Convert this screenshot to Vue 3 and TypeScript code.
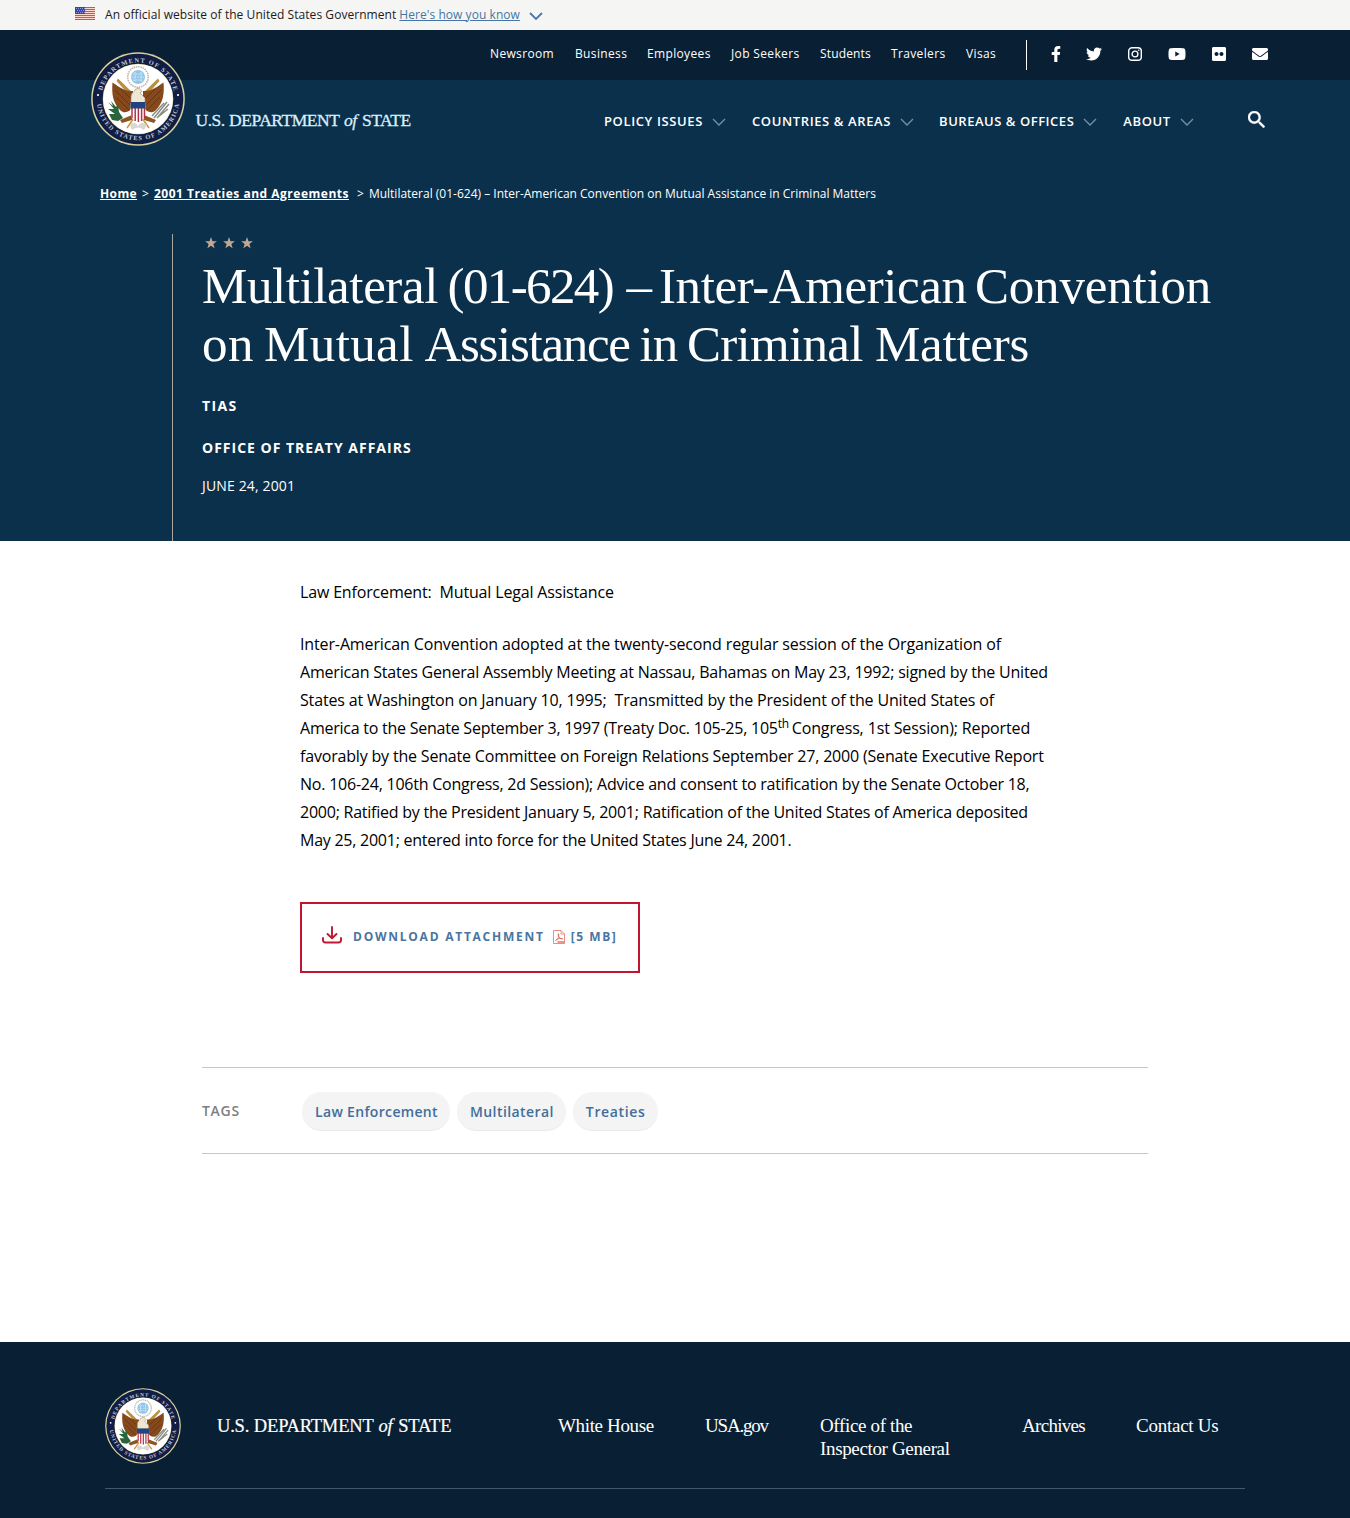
<script setup lang="ts">
interface Tag { label: string; tracking: number }
interface Word { text: string; width: number; tracking: number }
const utilityLinks: string[] = ['Newsroom', 'Business', 'Employees', 'Job Seekers', 'Students', 'Travelers', 'Visas']
const mainLinks: string[] = ['Policy Issues', 'Countries & Areas', 'Bureaus & Offices', 'About']
const tags: Tag[] = [
  { label: 'Law Enforcement', tracking: 0.33 },
  { label: 'Multilateral', tracking: 0.42 },
  { label: 'Treaties', tracking: 0.65 },
]
const titleLines: Word[][] = [
  [
    { text: 'Multilateral ', width: 245.5, tracking: -0.4 },
    { text: '(01-624) ', width: 179, tracking: -1.6 },
    { text: '– ', width: 32.5, tracking: -3.2 },
    { text: 'Inter-American ', width: 316, tracking: -0.4 },
    { text: 'Convention', width: 240, tracking: -0.2 },
  ],
  [
    { text: 'on ', width: 62, tracking: 0.5 },
    { text: 'Mutual ', width: 160.5, tracking: 0.4 },
    { text: 'Assistance ', width: 215, tracking: -1.3 },
    { text: 'in ', width: 47.5, tracking: -0.8 },
    { text: 'Criminal ', width: 188, tracking: -0.7 },
    { text: 'Matters', width: 160, tracking: -0.25 },
  ],
]
const stripes: number[] = [0, 2, 4, 6, 8, 10, 12]
const star = 'M6 0 7.45 4.2 11.9 4.3 8.35 7 9.65 11.3 6 8.7 2.35 11.3 3.65 7 .1 4.3 4.55 4.2Z'
</script>

<template>
  <svg class="defs" width="0" height="0" aria-hidden="true">
    <defs>
      <path id="arc-top" d="M10.5 47A36.5 36.5 0 0 1 83.5 47" />
      <path id="arc-bottom" d="M5.7 47A41.3 41.3 0 0 0 88.3 47" />
      <symbol id="seal" viewBox="0 0 94 94">
        <circle cx="47" cy="47" r="46.8" fill="#d9d3a0" />
        <circle cx="47" cy="47" r="45.3" fill="#111d42" />
        <circle cx="47" cy="47" r="35.3" fill="#d9d3a0" />
        <circle cx="47" cy="47" r="34.8" fill="#fff" />
        <text class="seal-text"><textPath href="#arc-top" startOffset="50%" text-anchor="middle" textLength="98">DEPARTMENT OF STATE</textPath></text>
        <text class="seal-text"><textPath href="#arc-bottom" startOffset="50%" text-anchor="middle" textLength="119">UNITED STATES OF AMERICA</textPath></text>
        <circle cx="7" cy="43" r="1.1" fill="#fff" /><circle cx="87" cy="43" r="1.1" fill="#fff" />
        <circle cx="47" cy="25" r="10.3" fill="#fff" stroke="#b9b7ab" stroke-width="1.6" stroke-dasharray="1.5 .8" />
        <circle cx="47" cy="25" r="7" fill="#8fc5e8" />
        <path d="M42 22h10M41 25h12M42 28h10M44 20v10M50 20v10" stroke="#d9edf8" stroke-width="1" stroke-dasharray="1.6 1" />
        <path d="M42 41 27 26.500 25.500 29 40 45ZM52 41 67 26.500 68.500 29 54 45Z" fill="#b9903f" />
        <path d="M42 39C34 40 27 34 21.500 30.500 20.500 42 22 51 29 58 34 63 39 59 42 55ZM52 39C60 40 67 34 72.500 30.500 73.500 42 72 51 65 58 60 63 55 59 52 55Z" fill="#86491b" />
        <path d="M24 38 39 53M25 45 38 58M30 37 41 48M70 38 55 53M69 45 56 58M64 37 53 48" stroke="#653411" stroke-width="1" />
        <path d="M40 46C40 40 43 41 44 37.500L48 36 51 39.500 49 41 54 46V51H40Z" fill="#ede7d4" stroke="#a5875a" stroke-width=".6" />
        <path d="M41 63 29 68 31 71 44 67ZM53 63 65 68 63 71 50 67Z" fill="#8c5522" />
        <path d="M43 66 36 76M51 66 58 76" stroke="#c99b42" stroke-width="1.6" />
        <path d="M17 50 22 54 20 49 25 55 27 52 28 60 32 66 27 69 21 68 18 62 24 62 17 57 23 57Z" fill="#28653a" />
        <path d="M63 66 76 50M66 66 78 52M61 64 73 51M67 65 77 57" stroke="#8a8c84" stroke-width="1.5" />
        <path d="M39.500 51H54.500V62Q54 68 47 70.500 40 68 39.500 62Z" fill="#fff" />
        <path d="M41 56V66M44.200 56V69M47.400 56V70M50.600 56V69M53.500 56V66" stroke="#b43243" stroke-width="1.5" />
        <path d="M39.500 50H54.500V56.500H39.500Z" fill="#24427e" />
        <path d="M39 73Q43 68 47 74 51 68 56 73L53 78Q47 73 41 78Z" fill="#d9d8d5" />
      </symbol>
      <symbol id="chevron" viewBox="0 0 14 8"><path d="M1 1 7 7 13 1" fill="none" stroke="currentColor" stroke-width="1.3" /></symbol>
    </defs>
  </svg>

  <div class="banner">
    <svg class="flag" viewBox="0 0 20 13">
      <rect width="20" height="13" fill="#fde6df" />
      <rect v-for="y in stripes" :key="y" :y="y" width="20" height="1.1" fill="#ee4a30" />
      <rect width="10" height="7" fill="#3346ad" />
      <path d="M1 1.500h9M2 3.500h8M1 5.500h9" stroke="#a9b2e2" stroke-width=".8" stroke-dasharray="1 1" />
    </svg>
    <span class="banner-text">An official website of the United States Government</span>
    <a class="banner-link">Here's how you know</a>
    <svg class="banner-chevron" viewBox="0 0 14 8"><path d="M1 1 7 7 13 1" fill="none" stroke="#4a77a8" stroke-width="1.8" /></svg>
  </div>

  <header>
    <div class="utility">
      <nav class="utility-links"><a v-for="l in utilityLinks" :key="l">{{ l }}</a></nav>
      <div class="social">
        <svg width="10" height="16" viewBox="0 0 320 512"><path d="M279.140 288l14.220-92.660h-88.910v-60.130c0-25.350 12.420-50.060 52.240-50.060h40.420V6.260S260.430 0 225.360 0c-73.220 0-121.080 44.380-121.080 124.720v70.620H22.890V288h81.390v224h100.170V288z" /></svg>
        <svg width="16" height="16" viewBox="0 0 512 512"><path d="M459.370 151.716c.325 4.548.325 9.097.325 13.645 0 138.720-105.583 298.558-298.558 298.558-59.452 0-114.680-17.219-161.137-47.106 8.447.974 16.568 1.299 25.340 1.299 49.055 0 94.213-16.568 130.274-44.832-46.132-.975-84.792-31.188-98.112-72.772 6.498.974 12.995 1.624 19.818 1.624 9.421 0 18.843-1.300 27.614-3.573-48.081-9.747-84.143-51.980-84.143-102.985v-1.299c13.969 7.797 30.214 12.670 47.431 13.319-28.264-18.843-46.781-51.005-46.781-87.391 0-19.492 5.197-37.360 14.294-52.954 51.655 63.675 129.300 105.258 216.365 109.807-1.624-7.797-2.599-15.918-2.599-24.040 0-57.828 46.782-104.934 104.934-104.934 30.213 0 57.502 12.670 76.670 33.137 23.715-4.548 46.456-13.320 66.599-25.340-7.798 24.366-24.366 44.833-46.132 57.827 21.117-2.273 41.584-8.122 60.426-16.243-14.292 20.791-32.161 39.308-52.628 54.253z" /></svg>
        <svg width="14" height="16" viewBox="0 0 14 16" fill="none" stroke="#fff"><rect x=".7" y="1.700" width="12.600" height="12.600" rx="3.400" stroke-width="1.400" /><circle cx="7" cy="8" r="2.900" stroke-width="1.400" /><circle cx="10.700" cy="4.300" r=".8" fill="#fff" stroke="none" /></svg>
        <svg width="18" height="16" viewBox="0 0 576 512"><path d="M549.655 124.083c-6.281-23.650-24.787-42.276-48.284-48.597C458.781 64 288 64 288 64S117.220 64 74.629 75.486c-23.497 6.322-42.003 24.947-48.284 48.597-11.412 42.867-11.412 132.305-11.412 132.305s0 89.438 11.412 132.305c6.281 23.650 24.787 41.500 48.284 47.821C117.220 448 288 448 288 448s170.780 0 213.371-11.486c23.497-6.321 42.003-24.171 48.284-47.821 11.412-42.867 11.412-132.305 11.412-132.305s0-89.438-11.412-132.305zm-317.510 213.508V175.185l142.739 81.205-142.739 81.201z" /></svg>
        <svg width="14" height="16" viewBox="0 0 448 512"><path d="M400 32H48C21.500 32 0 53.500 0 80v352c0 26.500 21.500 48 48 48h352c26.500 0 48-21.500 48-48V80c0-26.500-21.500-48-48-48zM144.500 319c-35.100 0-63.500-28.400-63.500-63.500s28.400-63.500 63.500-63.500 63.500 28.400 63.500 63.500-28.400 63.500-63.500 63.500zm159 0c-35.100 0-63.500-28.400-63.500-63.500s28.400-63.500 63.500-63.500 63.500 28.400 63.500 63.500-28.400 63.500-63.500 63.500z" /></svg>
        <svg width="16" height="16" viewBox="0 0 512 512"><path d="M502.300 190.800c3.900-3.100 9.700-.2 9.700 4.700V400c0 26.500-21.500 48-48 48H48c-26.500 0-48-21.500-48-48V195.600c0-5 5.700-7.800 9.700-4.700 22.400 17.400 52.100 39.500 154.100 113.600 21.100 15.400 56.700 47.800 92.200 47.600 35.700.3 72-32.800 92.300-47.600 102-74.100 131.600-96.300 154-113.700zM256 320c23.200.4 56.600-29.200 73.400-41.400 132.700-96.300 142.800-104.700 173.400-128.700 5.800-4.500 9.200-11.500 9.200-18.900v-19c0-26.500-21.500-48-48-48H48c-26.500 0-48 21.500-48 48v19c0 7.400 3.400 14.300 9.200 18.900 30.600 23.900 40.700 32.400 173.400 128.700 16.800 12.200 50.200 41.800 73.400 41.400z" /></svg>
      </div>
    </div>
    <div class="main-bar">
      <svg class="logo-seal"><use href="#seal" /></svg>
      <div class="wordmark">U.S. DEPARTMENT <i>of</i> STATE</div>
      <nav class="main-links">
        <a v-for="l in mainLinks" :key="l">{{ l }}<svg class="chev"><use href="#chevron" /></svg></a>
      </nav>
      <svg class="search" viewBox="3 3 17.500 17.500"><path fill="#fff" stroke="#fff" stroke-width=".4" d="M15.500 14h-.79l-.28-.27C15.410 12.590 16 11.110 16 9.500 16 5.910 13.090 3 9.500 3S3 5.910 3 9.500 5.910 16 9.500 16c1.610 0 3.090-.59 4.230-1.570l.27.28v.79l5 4.990L20.490 19l-4.990-5zm-6 0C7.010 14 5 11.990 5 9.500S7.010 5 9.500 5 14 7.010 14 9.500 11.990 14 9.500 14z" /></svg>
    </div>
  </header>

  <section class="hero">
    <div class="crumbs"><a class="c1">Home</a><span class="sep1">&gt;</span><a class="c2">2001 Treaties and Agreements</a><span class="sep2">&gt;</span><span>Multilateral (01-624) – Inter-American Convention on Mutual Assistance in Criminal Matters</span></div>
    <div class="hero-body">
      <div class="stars"><svg v-for="n in 3" :key="n" viewBox="0 0 12 12"><path :d="star" /></svg></div>
      <h1>
        <span v-for="(line, i) in titleLines" :key="i" class="title-line"><span v-for="w in line" :key="w.text" class="word" :style="{ width: w.width + 'px', letterSpacing: w.tracking + 'px' }">{{ w.text }}</span></span>
      </h1>
      <p class="kicker tias">TIAS</p>
      <p class="kicker office">OFFICE OF TREATY AFFAIRS</p>
      <p class="date">JUNE 24, 2001</p>
    </div>
  </section>

  <main>
    <article>
      <p><span class="l0">Law Enforcement:&nbsp; Mutual Legal Assistance</span></p>
      <p>
        <span class="l1">Inter-American Convention adopted at the twenty-second regular session of the Organization of</span>
        <span class="l2">American States General Assembly Meeting at Nassau, Bahamas on May 23, 1992; signed by the United</span>
        <span class="l3">States at Washington on January 10, 1995;&nbsp; Transmitted by the President of the United States of</span>
        <span class="l4">America to the Senate September 3, 1997 (Treaty Doc. 105-25, 105<sup>th </sup><b>Congress, 1st Session); Reported</b></span>
        <span class="l5">favorably by the Senate Committee on Foreign Relations September 27, 2000 (Senate Executive Report</span>
        <span class="l6">No. 106-24, 106th Congress, 2d Session); Advice and consent to ratification by the Senate October 18,</span>
        <span class="l7">2000; Ratified by the President January 5, 2001; Ratification of the United States of America deposited</span>
        <span class="l8">May 25, 2001; entered into force for the United States June 24, 2001.</span>
      </p>
      <a class="download">
        <svg class="dl-icon" viewBox="0 0 20 18" fill="none" stroke="#c0182f" stroke-width="1.900" stroke-linecap="round" stroke-linejoin="round"><path d="M10 1V12M5.500 8 10 12.300 14.500 8M1 12V14Q1 16.500 3.500 16.500H16.500Q19 16.500 19 14V12" /></svg>
        <span>DOWNLOAD ATTACHMENT</span>
        <svg class="pdf" viewBox="0 0 12 14" fill="none" stroke="#d9604f"><path d="M.5.500H8L11.500 4V13.500H.500Z" stroke-width=".7" /><path d="M8 .5V4H11.500" stroke-width=".6" /><path d="M2.500 10.500C5 9.500 6.500 6 5.500 3.500 4 5 7 9.500 9.800 8.800 8 7.800 4 8.800 2.500 10.500Z" stroke-width=".8" /><path d="M4.500 12H11" stroke-width="1.300" /></svg>
        <span class="size">[5 MB]</span>
      </a>
    </article>
    <section class="tags">
      <span class="tags-title">TAGS</span>
      <a v-for="t in tags" :key="t.label" :style="{ letterSpacing: t.tracking + 'px' }">{{ t.label }}</a>
    </section>
  </main>

  <footer>
    <div class="footer-row">
      <svg class="footer-seal"><use href="#seal" /></svg>
      <div class="footer-mark">U.S. DEPARTMENT <i>of</i> STATE</div>
      <nav>
        <a class="f1">White House</a><a class="f2">USA.gov</a><a class="f3">Office of the<br>Inspector General</a><a class="f4">Archives</a><a class="f5">Contact Us</a>
      </nav>
    </div>
  </footer>
</template>

<style>
body { background: #fff; }
</style>

<style scoped>
* { box-sizing: border-box; }
.defs { display: block; height: 0; }
.seal-text { font: 700 6.4px "Liberation Serif", serif; fill: #c3c9dc; }
.banner { height: 30px; background: #f5f5f4; display: flex; align-items: center; padding: 0 0 1px 75px; font: 12px/24px "Open Sans", sans-serif; letter-spacing: .055px; color: #1b1b1b; white-space: nowrap; }
.flag { width: 20px; height: 13px; margin: -2px 10px 0 0; }
.banner-text { margin-right: 3px; }
.banner-link { color: #4775a3; text-decoration: underline; }
.banner-chevron { width: 14px; height: 8px; margin: 3px 0 0 9px; }
header { color: #fff; font-family: "Open Sans", sans-serif; }
.utility { height: 50px; background: #091f33; display: flex; justify-content: flex-end; align-items: flex-start; padding: 10px 82px 0 0; }
.utility-links { display: grid; grid-template-columns: 85px 72px 84px 89px 71px 75px 31px; font-size: 12px; line-height: 24px; letter-spacing: .35px; padding-top: 2px; margin-right: 29px; white-space: nowrap; }
.utility-links a:nth-child(5) { letter-spacing: .15px; }
.social { height: 30px; width: 242px; border-left: 1px solid #fff; padding: 0 0 3px 24px; display: flex; justify-content: space-between; align-items: center; }
.social svg { fill: #fff; }
.social svg:nth-child(2), .social svg:nth-child(3) { margin-left: -1px; margin-right: 1px; }
.social svg[fill="none"] { fill: none; }
.main-bar { height: 80px; background: #0b304c; display: flex; align-items: flex-start; padding-left: 91px; }
.logo-seal { width: 94px; height: 94px; margin-top: -28px; position: relative; }
.wordmark { margin: 28px 0 0 10.5px; width: 216px; font: 17.500px/24px "Liberation Serif", serif; letter-spacing: -.46px; word-spacing: .4px; white-space: nowrap; color: #dbeefa; -webkit-text-stroke: .3px; }
.wordmark i, .footer-mark i { margin: 0 1px 0 .5px; }
.main-links { display: flex; gap: 26px; margin: 29px 0 0 192.500px; font-size: 13px; line-height: 24px; font-weight: 600; letter-spacing: .62px; text-transform: uppercase; white-space: nowrap; }
.main-links a { display: flex; align-items: center; }
.main-links a:nth-child(3) { letter-spacing: .53px; margin-left: -1px; }
.chev { width: 14px; height: 8px; margin: 1px 0 0 9px; color: #7790a5; }
.search { width: 17px; height: 17px; margin: 31px 0 0 auto; margin-right: 85px; }
.hero { height: 381px; background: #0b304c; color: #fff; font-family: "Open Sans", sans-serif; padding-top: 22px; }
.crumbs { padding-left: 100px; display: flex; font-size: 12px; line-height: 24px; white-space: nowrap; }
.crumbs a { font-weight: 700; text-decoration: underline; }
.c1 { letter-spacing: .39px; }
.c2 { letter-spacing: .51px; }
.sep1 { margin: 0 5px; }
.sep2 { margin: 0 5px 0 8px; }
.hero-body { margin: 28px 0 0 172px; height: 307px; border-left: 1px solid #a9a59b; padding-left: 29px; }
.stars { height: 23px; display: flex; gap: 6px; padding: 3px 0 0 3px; }
.stars svg { width: 12px; height: 12px; fill: #c5a790; }
h1 { margin: 0; font: 400 51px/58px "Liberation Serif", serif; white-space: nowrap; }
.title-line { display: flex; }
.word { display: block; flex: none; white-space: pre; }
.hero-body p { margin: 0; font-size: 14px; line-height: 24px; }
.hero-body .kicker { margin-top: 21px; font-weight: 700; letter-spacing: 1px; }
.hero-body .tias { letter-spacing: 1.400px; }
.hero-body .office { margin-top: 18px; }
.hero-body .date { margin-top: 14px; letter-spacing: .15px; }
main { height: 801px; padding-top: 37px; font-family: "Open Sans", sans-serif; }
article { margin-left: 300px; width: 750px; color: #000; }
article p { margin: 0 0 24px; font-size: 16px; line-height: 28px; white-space: nowrap; }
article p span { display: block; }
.l0 { letter-spacing: -.165px; }
.l1 { letter-spacing: -.13px; }
.l2 { letter-spacing: -.203px; }
.l3 { letter-spacing: -.157px; }
.l4 { letter-spacing: -.24px; }
.l4 b { font-weight: 400; letter-spacing: -.14px; }
.l5 { letter-spacing: -.182px; }
.l6 { letter-spacing: -.226px; }
.l7 { letter-spacing: -.242px; }
.l8 { letter-spacing: -.247px; }
sup { font-size: 75%; line-height: 0; position: relative; vertical-align: baseline; top: -.5em; white-space: pre; }
.download { display: flex; align-items: center; width: 340px; height: 71px; margin-top: 48px; border: 2px solid #c0152f; padding: 0 0 2px 20px; font-size: 12px; font-weight: 700; letter-spacing: 1.750px; color: #4a75a0; white-space: nowrap; }
.dl-icon { width: 20px; height: 18px; margin: -3px 11px 0 0; }
.pdf { width: 12px; height: 14px; margin: 1px 6px 0 8px; }
.size { letter-spacing: 1.550px; }
.tags { margin: 94px 0 0 202px; width: 946px; height: 87px; border-top: 1px solid #c5c8cb; border-bottom: 1px solid #c5c8cb; display: flex; align-items: center; padding-top: 2px; font-size: 14px; font-weight: 600; white-space: nowrap; }
.tags-title { width: 100px; color: #808080; letter-spacing: .7px; font-size: 14px; padding-bottom: 2px; }
.tags a { height: 39px; line-height: 39px; padding: 0 12.5px 0 13px; margin-right: 6.5px; border-radius: 20px; background: #f4f4f4; border-bottom: 1px solid #e9e9e9; color: #426e9c; }
footer { height: 176px; background: #091f33; color: #fff; padding: 46px 105px 0; font: 19px/23px "Liberation Serif", serif; white-space: nowrap; }
.footer-row { height: 101px; border-bottom: 1px solid #44586a; display: flex; align-items: flex-start; }
.footer-seal { width: 76px; height: 76px; }
.footer-mark { width: 234px; margin: 27px 107px 0 36px; font-size: 18.500px; letter-spacing: -.19px; word-spacing: .3px; -webkit-text-stroke: .2px; }
footer nav { display: flex; padding-top: 26px; letter-spacing: -.35px; }
.f1 { width: 147px; } .f2 { width: 115px; letter-spacing: -1.200px; } .f3 { width: 202px; } .f4 { width: 114px; letter-spacing: -.7px; } .f5 { letter-spacing: -.25px; }
</style>
